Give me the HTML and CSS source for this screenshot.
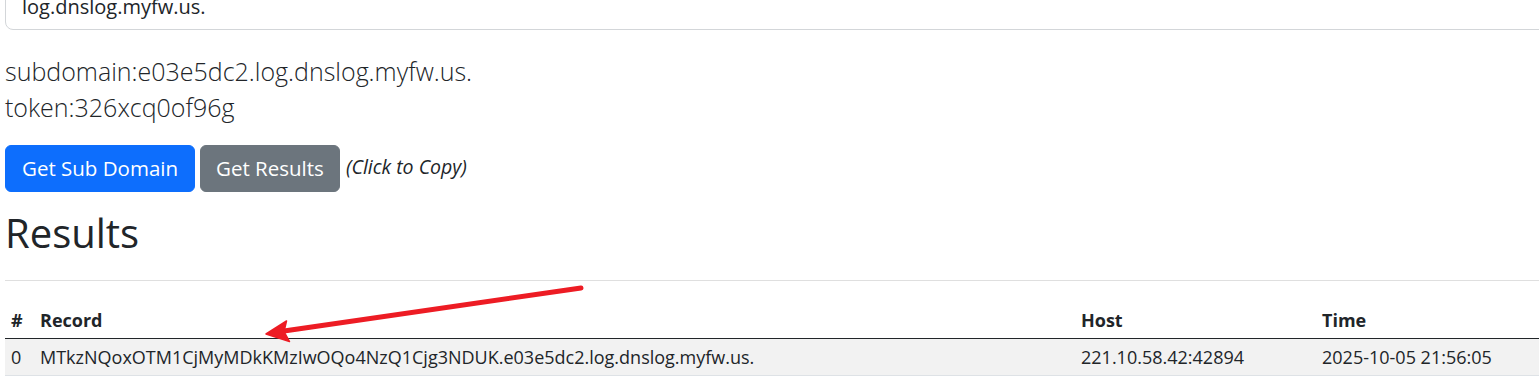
FILE: index.html
```html
<!DOCTYPE html>
<html lang="en">
<head>
<meta charset="utf-8">
<title>DNSLog</title>
<link rel="stylesheet" href="styles.css">
</head>
<body>
<main class="page">
  <input class="domain-input" type="text" value="log.dnslog.myfw.us." readonly>
  <div class="info">
    <div class="info-line">subdomain:e03e5dc2.log.dnslog.myfw.us.</div>
    <div class="info-line">token:326xcq0of96g</div>
  </div>
  <div class="actions">
    <button class="btn btn-primary" type="button">Get Sub Domain</button>
    <button class="btn btn-secondary" type="button">Get Results</button>
    <em class="hint">(Click to Copy)</em>
  </div>
  <h1 class="title">Results</h1>
  <hr class="divider">
  <table class="results">
    <colgroup>
      <col class="c-idx">
      <col class="c-record">
      <col class="c-host">
      <col class="c-time">
    </colgroup>
    <thead>
      <tr><th>#</th><th>Record</th><th>Host</th><th>Time</th></tr>
    </thead>
    <tbody>
      <tr class="striped"><td>0</td><td>MTkzNQoxOTM1CjMyMDkKMzIwOQo4NzQ1Cjg3NDUK.e03e5dc2.log.dnslog.myfw.us.</td><td>221.10.58.42:42894</td><td>2025-10-05 21:56:05</td></tr>
    </tbody>
  </table>
</main>
<svg class="annotation" width="1539" height="383" viewBox="0 0 1539 383" aria-hidden="true">
  <line x1="581" y1="288" x2="284" y2="331" stroke="#ed1c24" stroke-width="5" stroke-linecap="round"/>
  <polygon points="266,334 286.5,321 284,331.5 289.5,341.5" fill="#ed1c24" stroke="#ed1c24" stroke-width="1.5" stroke-linejoin="round"/>
</svg>
</body>
</html>
```

FILE: styles.css
```css
html, body {
  margin: 0;
  padding: 0;
  overflow: hidden;
  background: #fff;
}

body {
  width: 1539px;
  height: 383px;
  font-family: "Open Sans", "Noto Sans", sans-serif;
  color: #212529;
}

.page {
  margin-top: -18px;
  padding-left: 5px;
  width: 1560px;
  box-sizing: border-box;
}

.domain-input {
  display: block;
  width: 100%;
  height: 48px;
  box-sizing: border-box;
  padding: 8px 16px;
  font-family: inherit;
  font-size: 20px;
  color: #212529;
  background: #fff;
  border: 1px solid #d3d6d9;
  border-radius: 8px;
  outline: none;
}

.info {
  margin-top: 23px;
}

.info-line {
  font-size: 25px;
  font-weight: 300;
  line-height: 36px;
}

.actions {
  margin-top: 20px;
  display: flex;
  align-items: center;
  gap: 5px;
}

.btn {
  font-family: inherit;
  font-size: 20.5px;
  line-height: 29px;
  padding: 8px 16px;
  border: 1px solid transparent;
  border-radius: 6px;
  color: #fff;
  cursor: pointer;
}

.btn-primary {
  background: #0d6efd;
  border-color: #0d6efd;
}

.btn-secondary {
  background: #6c757d;
  border-color: #6c757d;
  padding: 8px 15px;
}

.hint {
  font-size: 19.5px;
  font-style: italic;
  margin-left: 1px;
  margin-top: -5px;
}

.title {
  margin: 16px 0 0;
  font-size: 40px;
  font-weight: 400;
  line-height: 50px;
}

.divider {
  margin: 22px 0 0;
  border: 0;
  border-top: 1px solid #dfdfdf;
  height: 0;
}

.results {
  margin-top: 21px;
  width: 100%;
  table-layout: fixed;
  border-collapse: collapse;
  font-size: 18px;
}

.c-idx { width: 29px; }
.c-record { width: 1041px; }
.c-host { width: 241px; }

.results th,
.results td {
  text-align: left;
  padding: 4px 6px;
  line-height: 28px;
  white-space: nowrap;
}

.results th {
  font-weight: 700;
  border-bottom: 1px solid #212529;
}

.results td {
  border-bottom: 1px solid #dee2e6;
}

.striped {
  background: #f2f2f2;
}

.annotation {
  position: absolute;
  left: 0;
  top: 0;
  pointer-events: none;
}
```
